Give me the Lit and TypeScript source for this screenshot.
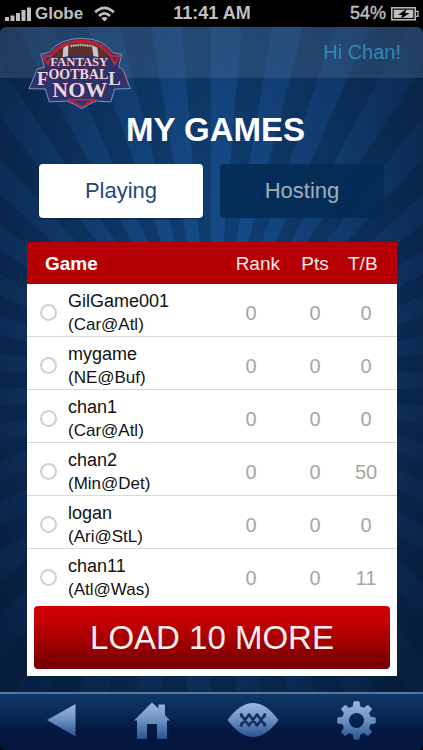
import { LitElement, html, css, svg } from "lit";
import { customElement, property, state } from "lit/decorators.js";
import { classMap } from "lit/directives/class-map.js";

interface Game {
  name: string;
  match: string;
  rank: number;
  pts: number;
  tb: number;
}

const GAMES: Game[] = [
  { name: "GilGame001", match: "(Car@Atl)", rank: 0, pts: 0, tb: 0 },
  { name: "mygame", match: "(NE@Buf)", rank: 0, pts: 0, tb: 0 },
  { name: "chan1", match: "(Car@Atl)", rank: 0, pts: 0, tb: 0 },
  { name: "chan2", match: "(Min@Det)", rank: 0, pts: 0, tb: 50 },
  { name: "logan", match: "(Ari@StL)", rank: 0, pts: 0, tb: 0 },
  { name: "chan11", match: "(Atl@Was)", rank: 0, pts: 0, tb: 11 },
];

@customElement("status-bar")
export class StatusBar extends LitElement {
  static styles = css`
    :host {
      display: grid;
      grid-template-columns: 1fr auto 1fr;
      align-items: center;
      height: 27px;
      padding: 0 4px 0 5px;
      background: #000;
      color: #bfbfbf;
      font-size: 18px;
      font-weight: bold;
    }
    .side {
      display: flex;
      align-items: center;
    }
    .end {
      justify-content: flex-end;
      gap: 5px;
      font-weight: normal;
      -webkit-text-stroke: 0.4px #bfbfbf;
    }
    .carrier {
      margin: 0 11px 0 4px;
      font-size: 17px;
    }
  `;

  render() {
    return html`
      <div class="side">
        <svg width="26" height="14" viewBox="0 0 26 14" fill="#bfbfbf" aria-hidden="true">
          <rect x="0" y="10" width="4" height="4" />
          <rect x="5.5" y="8.5" width="4" height="5.5" />
          <rect x="11" y="6" width="4" height="8" />
          <rect x="16.500" y="3" width="4" height="11" />
          <rect x="22" y="0.500" width="4" height="13.500" />
        </svg>
        <span class="carrier">Globe</span>
        <svg width="21" height="16" viewBox="0 0 21 16" fill="none" stroke="#bfbfbf" stroke-width="2.800" aria-hidden="true">
          <path d="M1.200 6.300Q10.500-2.600 19.800 6.300" />
          <path d="M5 10Q10.500 4.800 16 10" />
          <path d="M10.500 15.500L7.300 12.300Q10.500 9.600 13.700 12.300Z" fill="#bfbfbf" stroke="none" />
        </svg>
      </div>
      <span>11:41 AM</span>
      <div class="side end">
        <span>54%</span>
        <svg width="28" height="14" viewBox="0 0 28 14" aria-hidden="true">
          <rect x="0.800" y="0.800" width="23.400" height="12" fill="none" stroke="#bfbfbf" stroke-width="1.500" />
          <path d="M25 4.300h2v5h-2" fill="none" stroke="#bfbfbf" stroke-width="1.300" />
          <rect x="2.700" y="2.700" width="19.600" height="8.200" fill="#bfbfbf" />
          <path d="M15.600 1.800L7 8h4.300l-1.500 4 8.800-6h-4.600z" fill="#000" />
        </svg>
      </div>
    `;
  }
}

@customElement("team-logo")
export class TeamLogo extends LitElement {
  static styles = css`
    :host {
      display: block;
    }
    svg {
      display: block;
    }
    text {
      font-family: "Liberation Serif", serif;
      font-weight: bold;
      fill: #dcdde8;
      stroke: #5c2040;
      stroke-width: 5px;
      stroke-linejoin: round;
      paint-order: stroke;
    }
    .top {
      font-size: 38px;
    }
    .mid {
      font-size: 42px;
    }
    .cap {
      font-size: 56px;
    }
    .low {
      font-size: 66px;
    }
  `;

  render() {
    return html`
      <svg width="120" height="90" viewBox="0 0 360 270" role="img" aria-label="Fantasy Football Now">
        <path
          d="M62 73L86 68Q120 25 185 25T278 68L305 73L296 111L309 118L331 176L284 177L272 216L230 213Q205 222 185 236Q165 222 140 213L88 216L76 177L27 176L52 117L74 111Z"
          fill="#26346f" stroke="#8793b5" stroke-width="3" />
        <path d="M83 78Q120 29 185 29T279 78L266 78Q235 40 185 40T96 78Z" fill="#b52232" />
        <path d="M96 84Q128 39 185 39T266 84Q185 69 96 84Z" fill="#5b3029" />
        <path d="M130 53L145 45L144 79L128 82ZM216 45L232 53L236 81L220 79Z" fill="#c9c6cb" />
        <path d="M150 48Q183 41 216 48M154 44v8M161 43v8M168 42v8M175 41v8M182 41v8M189 41v8M196 42v8M203 43v8M210 44v8" stroke="#c9c6cb" stroke-width="2.500" fill="none" />
        <path d="M70 78L93 78L84 103ZM298 78L272 78L284 103Z" fill="#35355f" stroke="#c02637" stroke-width="6" />
        <path d="M58 121L76 116M302 116L308 124L323 168" stroke="#7c2945" stroke-width="4" fill="none" />
        <path d="M143 209L229 209Q200 218 186 231Q170 218 143 209Z" fill="#253776" stroke="#c02637" stroke-width="5" />
        <text class="top" x="91" y="109">FANTASY</text>
        <text class="mid" x="51" y="146"><tspan class="cap" dy="18">F</tspan><tspan dy="-18">OOTBAL</tspan><tspan class="cap" dy="18">L</tspan></text>
        <text class="low" x="97" y="202">NOW</text>
      </svg>
    `;
  }
}

@customElement("games-table")
export class GamesTable extends LitElement {
  @property({ attribute: false }) games: Game[] = [];

  static styles = css`
    :host {
      display: block;
    }
    table {
      width: 100%;
      border-collapse: collapse;
      table-layout: fixed;
    }
    th,
    td {
      padding: 0;
      font-weight: normal;
      text-align: center;
    }
    .pick {
      width: 41px;
    }
    .rank {
      width: 62px;
    }
    .pts {
      width: 66px;
    }
    .tb {
      width: 49px;
    }
    thead th {
      height: 42px;
      padding-top: 2px;
      box-sizing: border-box;
      background: #b70004;
      color: #f8e9e9;
      font-size: 19px;
    }
    thead .game {
      padding-left: 18px;
      color: #fff;
      font-weight: bold;
      text-align: left;
    }
    thead .rank {
      padding-right: 2px;
      text-align: right;
    }
    thead .tb {
      text-align: left;
    }
    tbody td,
    tbody th {
      height: 46px;
      padding-top: 6px;
      border-bottom: 1px solid #dadada;
      color: #a6a6a6;
      font-size: 20px;
    }
    tbody tr:last-child > * {
      border-bottom-color: transparent;
    }
    tbody .radio {
      height: 48px;
      padding-top: 4px;
    }
    tbody .name {
      color: #111;
      font-size: 18px;
      line-height: 23px;
      text-align: left;
    }
    tbody .tb {
      padding-right: 13px;
    }
    label {
      display: block;
    }
    .match {
      display: block;
      font-size: 17px;
    }
    input {
      appearance: none;
      display: block;
      width: 17px;
      height: 17px;
      margin: 0 0 0 13px;
      border: 2px solid #d0d0d0;
      border-radius: 50%;
      background: #fff;
    }
    input:checked {
      background: #b70004;
    }
  `;

  render() {
    return html`
      <table>
        <colgroup>
          <col class="pick" />
          <col />
          <col class="rank" />
          <col class="pts" />
          <col class="tb" />
        </colgroup>
        <thead>
          <tr>
            <th class="game" colspan="2" scope="col">Game</th>
            <th class="rank" scope="col">Rank</th>
            <th class="pts" scope="col">Pts</th>
            <th class="tb" scope="col">T/B</th>
          </tr>
        </thead>
        <tbody>
          ${this.games.map(
            (g) => html`
              <tr>
                <td class="radio"><input type="radio" name="game" id=${g.name} /></td>
                <th class="name" scope="row">
                  <label for=${g.name}>${g.name}<span class="match">${g.match}</span></label>
                </th>
                <td class="rank">${g.rank}</td>
                <td class="pts">${g.pts}</td>
                <td class="tb">${g.tb}</td>
              </tr>
            `
          )}
        </tbody>
      </table>
    `;
  }
}

@customElement("nav-bar")
export class NavBar extends LitElement {
  static styles = css`
    :host {
      display: block;
    }
    nav {
      display: flex;
      align-items: center;
      justify-content: space-between;
      height: 58px;
      padding: 0 47px 4px;
      box-sizing: border-box;
      border-top: 2px solid #56789b;
      background: linear-gradient(#0f3868, #082a58 35%, #03173f 65%, #03163c);
    }
    button {
      padding: 0;
      border: 0;
      background: none;
    }
    svg {
      display: block;
    }
  `;

  private fade(id: string) {
    return svg`
      <linearGradient id=${id} x1="0" y1="0" x2="0" y2="1">
        <stop offset="0" stop-color="#9bb9e0" />
        <stop offset="0.500" stop-color="#6b90c2" />
        <stop offset="1" stop-color="#26528e" />
      </linearGradient>
    `;
  }

  render() {
    const teeth = [0, 45, 90, 135, 180, 225, 270, 315];
    return html`
      <nav>
        <button aria-label="Back">
          <svg width="29" height="34" viewBox="0 0 29 34">
            ${this.fade("back")}
            <path d="M0 17L28.500 1v32.500z" fill="url(#back)" />
          </svg>
        </button>
        <button aria-label="Home">
          <svg width="36" height="37" viewBox="0 0 36 37">
            ${this.fade("home")}
            <path d="M18 0.500L24.500 6.500V2.500H31V13L36 18.500H33V37H23V22H13V37H3V18.500H0Z" fill="url(#home)" />
          </svg>
        </button>
        <button aria-label="Games">
          <svg width="52" height="36" viewBox="0 0 52 36">
            ${this.fade("ball")}
            <path d="M0.500 18Q13 1 26 1T51.500 18Q39 35 26 35T0.500 18Z" fill="url(#ball)" />
            <path
              d="M14 12.500L22 23.500M22 12.500L14 23.500M22 12.500L30 23.500M30 12.500L22 23.500M30 12.500L38 23.500M38 12.500L30 23.500M14.500 12.500v2M14.500 21.500v2M37.500 12.500v2M37.500 21.500v2"
              fill="none" stroke="#143061" stroke-width="2.600" stroke-linecap="round" />
          </svg>
        </button>
        <button aria-label="Settings">
          <svg width="39" height="39" viewBox="0 0 39 39">
            ${this.fade("gear")}
            <mask id="teeth">
              <circle cx="19.500" cy="19.500" r="14.500" fill="#fff" />
              ${teeth.map(
                (a) => svg`<path d="M16 7L17 0.800H22L23 7Z" fill="#fff" stroke="#fff" stroke-linejoin="round" transform="rotate(${a} 19.500 19.500)" />`
              )}
              <circle cx="19.500" cy="19.500" r="7.500" fill="#000" />
            </mask>
            <rect width="39" height="39" fill="url(#gear)" mask="url(#teeth)" />
          </svg>
        </button>
      </nav>
    `;
  }
}

@customElement("app-root")
export class AppRoot extends LitElement {
  @state() private tab = "Playing";

  static styles = css`
    :host {
      display: flex;
      flex-direction: column;
      min-height: 100vh;
      background: #000;
      font-family: "Liberation Sans", Arial, sans-serif;
    }
    .screen {
      display: flex;
      flex: 1;
      flex-direction: column;
      overflow: hidden;
      border-radius: 6px;
      background:
        radial-gradient(ellipse 66% 80% at 50% 31%, transparent 10%, rgba(3, 18, 43, 0.3) 50%, rgba(3, 18, 43, 0.75)),
        repeating-conic-gradient(#154a86 0 4.737deg, #0f3d70 4.737deg 9.474deg);
    }
    header {
      position: relative;
      display: flex;
      align-items: center;
      justify-content: flex-end;
      height: 51px;
      padding: 0 22px;
      box-sizing: border-box;
      background: rgba(110, 140, 170, 0.24);
    }
    team-logo {
      position: absolute;
      top: 3px;
      left: 20px;
    }
    .hello {
      color: #3187b4;
      font-size: 20px;
      text-decoration: none;
    }
    main {
      display: flex;
      flex: 1;
      flex-direction: column;
    }
    h1 {
      margin: 32px 0 14px;
      padding-left: 8px;
      color: #fff;
      font-size: 33px;
      line-height: 40px;
      text-align: center;
    }
    .tabs {
      display: grid;
      grid-template-columns: 1fr 1fr;
      gap: 17px;
      margin: 0 39px 24px;
    }
    .tab {
      height: 54px;
      padding: 0;
      border: 0;
      border-radius: 4px;
      background: rgba(3, 43, 84, 0.9);
      color: #a3adba;
      font-family: inherit;
      font-size: 22px;
    }
    .tab.on {
      background: #fff;
      color: #22497b;
      box-shadow: 0 1px 2px rgba(0, 0, 0, 0.4);
    }
    .panel {
      margin: 0 26px 16px 27px;
      padding-bottom: 7px;
      background: #fff;
    }
    .more {
      display: block;
      width: calc(100% - 14px);
      height: 63px;
      margin: 4px 7px 0;
      border: 0;
      border-radius: 4px;
      background: linear-gradient(#d00002, #c40002 25%, #720002);
      color: #fff0f0;
      font-family: inherit;
      font-size: 33px;
    }
    nav-bar {
      margin-top: auto;
    }
  `;

  render() {
    return html`
      <status-bar></status-bar>
      <div class="screen">
        <header>
          <team-logo></team-logo>
          <a class="hello" href="#profile">Hi Chan!</a>
        </header>
        <main>
          <h1>MY GAMES</h1>
          <div class="tabs">
            ${["Playing", "Hosting"].map(
              (t) => html`
                <button
                  class=${classMap({ tab: true, on: t === this.tab })}
                  aria-pressed=${t === this.tab}
                  @click=${() => (this.tab = t)}
                >
                  ${t}
                </button>
              `
            )}
          </div>
          <section class="panel">
            <games-table .games=${GAMES}></games-table>
            <button class="more">LOAD 10 MORE</button>
          </section>
        </main>
        <nav-bar></nav-bar>
      </div>
    `;
  }
}
